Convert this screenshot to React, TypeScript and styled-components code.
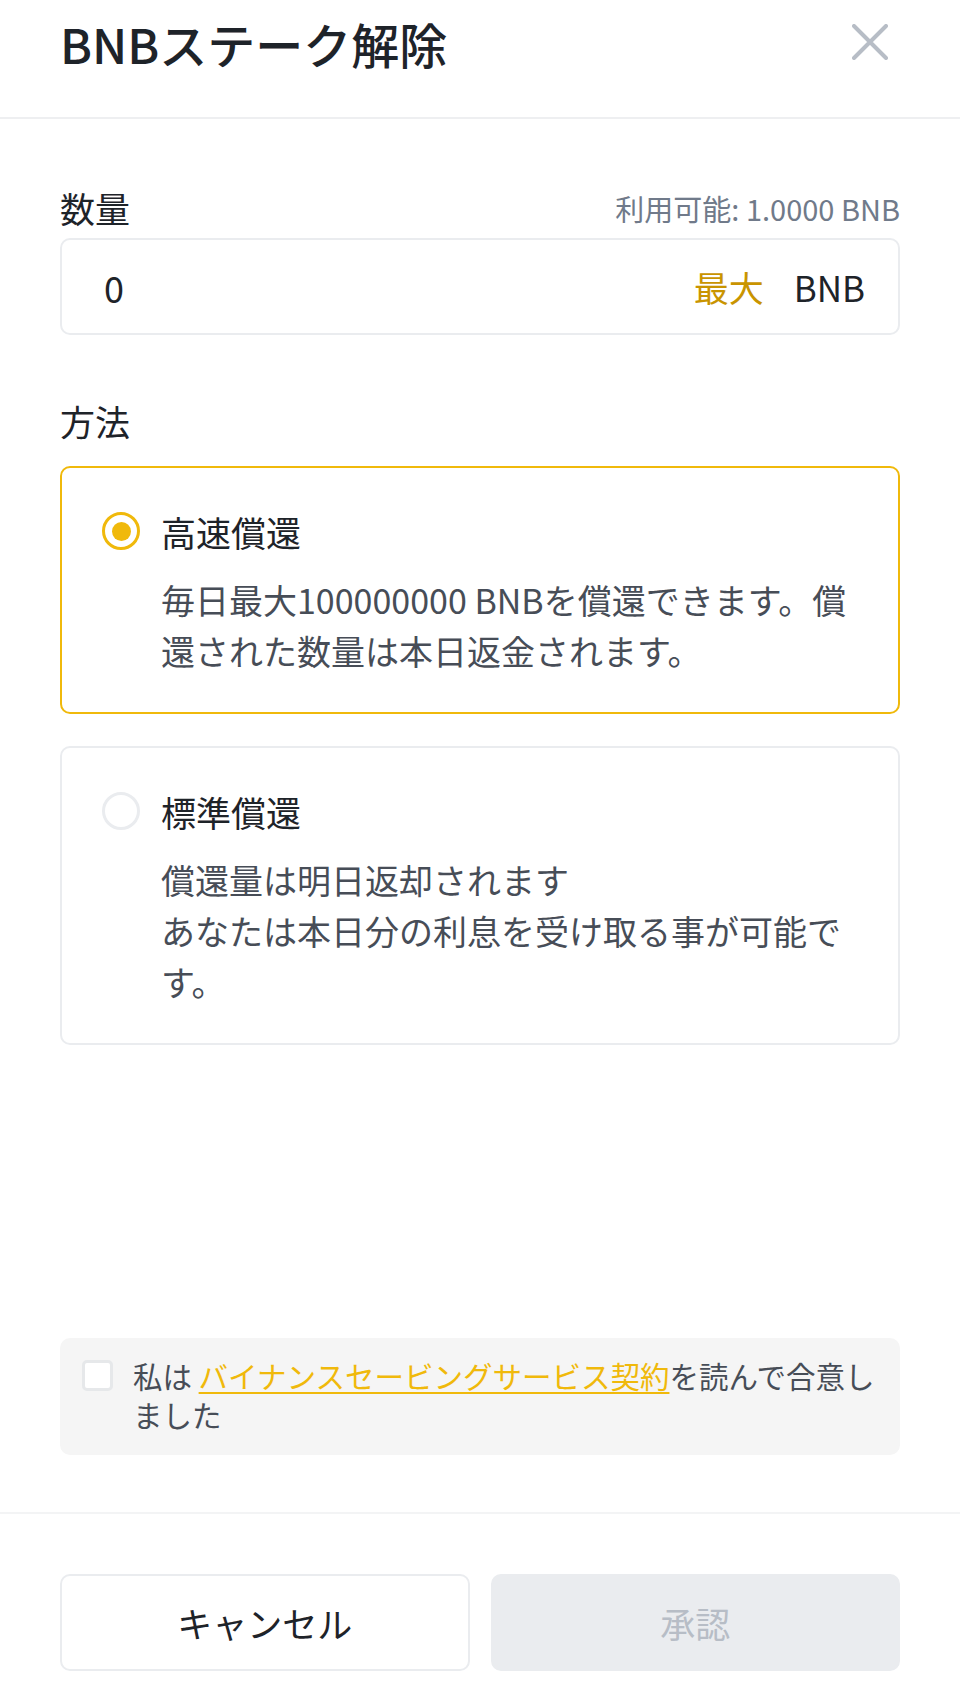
import { createGlobalStyle, styled } from 'styled-components';

const GlobalStyle = createGlobalStyle`
  html, body {
    margin: 0;
    padding: 0;
    background: #ffffff;
  }
  body {
    font-family: "Noto Sans CJK JP", "Noto Sans", sans-serif;
    color: #1e2329;
  }
  * {
    box-sizing: border-box;
  }
`;

const Page = styled.div`
  display: flex;
  flex-direction: column;
  min-height: 1706px;
  width: 960px;
`;

const Header = styled.header`
  display: flex;
  align-items: flex-start;
  justify-content: space-between;
  height: 119px;
  padding: 14px 70px 0 60px;
  border-bottom: 2px solid #eeeff1;
`;

const Title = styled.h1`
  margin: 0;
  font-size: 48px;
  line-height: 58px;
  font-weight: 500;
  color: #1e2329;
`;

const CloseButton = styled.button`
  display: flex;
  align-items: center;
  justify-content: center;
  width: 40px;
  height: 40px;
  margin-top: 8px;
  padding: 0;
  border: none;
  background: transparent;
  cursor: pointer;
`;

const Body = styled.main`
  flex: 1;
  display: flex;
  flex-direction: column;
  padding: 0 60px;
`;

const LabelRow = styled.div`
  display: flex;
  align-items: center;
  justify-content: space-between;
  height: 44px;
  margin-top: 67px;
`;

const Label = styled.span`
  font-size: 35px;
  line-height: 44px;
  color: #1e2329;
`;

const Available = styled.span`
  font-size: 29px;
  color: #707a8a;
`;

const InputBox = styled.div`
  display: flex;
  align-items: center;
  height: 97px;
  margin-top: 8px;
  padding: 0 33px 0 42px;
  border: 2px solid #eaecef;
  border-radius: 10px;
`;

const Amount = styled.span`
  flex: 1;
  font-size: 36px;
  color: #1e2329;
`;

const MaxButton = styled.span`
  font-size: 35px;
  color: #c99400;
  margin-right: 30px;
`;

const Unit = styled.span`
  font-size: 35px;
  color: #1e2329;
`;

const MethodLabel = styled(Label)`
  display: block;
  margin-top: 64px;
`;

const OptionList = styled.div`
  display: flex;
  flex-direction: column;
  gap: 32px;
  margin-top: 23px;
`;

const OptionCard = styled.div<{ $active: boolean }>`
  display: flex;
  flex-direction: column;
  padding: 41px 30px 36px 40px;
  border: 2px solid ${(p) => (p.$active ? '#f0b90b' : '#eaecef')};
  border-radius: 10px;
`;

const OptionHead = styled.div`
  display: flex;
  align-items: center;
  gap: 21px;
  height: 44px;
`;

const Radio = styled.span<{ $checked: boolean }>`
  display: flex;
  align-items: center;
  justify-content: center;
  width: 38px;
  height: 38px;
  border-radius: 50%;
  border: 3px solid ${(p) => (p.$checked ? '#f0b90b' : '#eaecef')};

  &::after {
    content: '';
    display: ${(p) => (p.$checked ? 'block' : 'none')};
    width: 19px;
    height: 19px;
    border-radius: 50%;
    background: #f0b90b;
  }
`;

const OptionTitle = styled.span`
  font-size: 35px;
  color: #1e2329;
`;

const OptionDesc = styled.p`
  margin: 21px 0 0 59px;
  font-size: 34px;
  line-height: 51px;
  color: #474d57;
`;

const Agreement = styled.label`
  display: flex;
  align-items: flex-start;
  gap: 20px;
  margin: 0 60px 57px;
  padding: 18px 10px 21px 22px;
  background: #f5f5f5;
  border-radius: 10px;
`;

const CheckBox = styled.span`
  flex: none;
  width: 31px;
  height: 31px;
  margin-top: 4px;
  background: #ffffff;
  border: 3px solid #e6e8ea;
  border-radius: 5px;
`;

const AgreementText = styled.span`
  font-size: 29.5px;
  line-height: 39px;
  color: #474d57;
`;

const Link = styled.a`
  color: #f0b90b;
  text-decoration: underline;
  text-underline-offset: 4px;
  text-decoration-thickness: 2px;
`;

const Footer = styled.footer`
  display: flex;
  gap: 21px;
  padding: 60px 60px 35px;
  border-top: 2px solid #f3f4f5;
`;

const Button = styled.button<{ $primary?: boolean }>`
  flex: 1;
  height: 97px;
  font-family: inherit;
  font-size: 35px;
  border-radius: 10px;
  border: 2px solid #eaecef;
  background: ${(p) => (p.$primary ? '#eaecef' : '#ffffff')};
  color: ${(p) => (p.$primary ? '#b7bdc6' : '#1e2329')};
`;

function CloseIcon() {
  return (
    <svg width="36" height="36" viewBox="0 0 36 36">
      <path d="M2 2 L34 34 M34 2 L2 34" stroke="#b7bdc6" strokeWidth="4" strokeLinecap="round" />
    </svg>
  );
}

export default function App() {
  return (
    <Page>
      <GlobalStyle />
      <Header>
        <Title>BNBステーク解除</Title>
        <CloseButton aria-label="閉じる">
          <CloseIcon />
        </CloseButton>
      </Header>
      <Body>
        <LabelRow>
          <Label>数量</Label>
          <Available>利用可能: 1.0000 BNB</Available>
        </LabelRow>
        <InputBox>
          <Amount>0</Amount>
          <MaxButton>最大</MaxButton>
          <Unit>BNB</Unit>
        </InputBox>
        <MethodLabel>方法</MethodLabel>
        <OptionList>
          <OptionCard $active>
            <OptionHead>
              <Radio $checked />
              <OptionTitle>高速償還</OptionTitle>
            </OptionHead>
            <OptionDesc>毎日最大100000000 BNBを償還できます。償還された数量は本日返金されます。</OptionDesc>
          </OptionCard>
          <OptionCard $active={false}>
            <OptionHead>
              <Radio $checked={false} />
              <OptionTitle>標準償還</OptionTitle>
            </OptionHead>
            <OptionDesc>
              償還量は明日返却されます
              <br />
              あなたは本日分の利息を受け取る事が可能です。
            </OptionDesc>
          </OptionCard>
        </OptionList>
      </Body>
      <Agreement>
        <CheckBox />
        <AgreementText>
          私は <Link>バイナンスセービングサービス契約</Link>を読んで合意しました
        </AgreementText>
      </Agreement>
      <Footer>
        <Button>キャンセル</Button>
        <Button $primary>承認</Button>
      </Footer>
    </Page>
  );
}
